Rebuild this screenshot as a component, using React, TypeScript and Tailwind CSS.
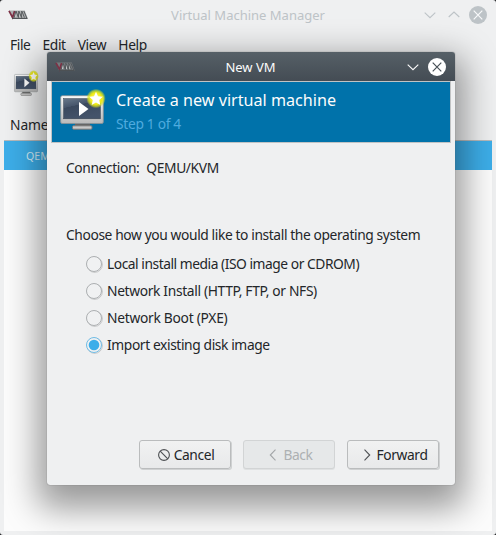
import React from "react";

function VmmLogo() {
  return (
    <svg width="20" height="12" viewBox="0 0 20 12" className="shrink-0" fill="none">
      <path d="M1 1.5h15.8l3 8.3H4z" fill="#8b8d8f" opacity=".65" />
      <path d="M7.6 8 7.8 2.5M11.4 8l-.5-5.5M15 8l-1-5.5" stroke="#c4c5c6" strokeWidth="1.4" />
      <path d="M1 1.8 4.6 8.6 6.6 2" stroke="#7c3045" strokeWidth="1.7" />
      <path d="M6 8.8 8 2l2.4 6.5.4-6.5 2.8 6.5L13.8 2l2.6 6.5M15.8 2l3 7" stroke="#54585b" strokeWidth="1" />
      <path d="M4 9.4h15.5" stroke="#4c5053" strokeWidth="1.1" />
    </svg>
  );
}

function MonitorIcon({ width, height, id }: { width: number; height: number; id: string }) {
  return (
    <svg width={width} height={height} viewBox="0 0 48 48" preserveAspectRatio="none" className="shrink-0 overflow-visible" fill="none">
      <defs>
        <linearGradient id={id + "frame"} x1="0" y1="0" x2="0" y2="1">
          <stop stopColor="#fafafa" />
          <stop offset="1" stopColor="#b9b9b9" />
        </linearGradient>
        <linearGradient id={id + "screen"} x1="0" y1="0" x2=".4" y2="1">
          <stop stopColor="#68788a" />
          <stop offset=".4" stopColor="#46556b" />
          <stop offset=".41" stopColor="#3b495e" />
          <stop offset="1" stopColor="#44536a" />
        </linearGradient>
        <radialGradient id={id + "glow"}>
          <stop stopColor="#fffb90" />
          <stop offset=".6" stopColor="#eeea14" />
          <stop offset=".8" stopColor="#dce320" stopOpacity=".7" />
          <stop offset="1" stopColor="#d5df20" stopOpacity="0" />
        </radialGradient>
      </defs>
      <path d="M17 36h15v3.5H17z" fill="#666" />
      <rect x="14.5" y="38.8" width="19.5" height="3.4" rx="1" fill="#c9c9c9" stroke="#777" />
      <rect x="2.7" y="8.7" width="42.6" height="27.8" rx="1.5" fill={`url(#${id}frame)`} stroke="#8b9094" strokeWidth=".8" />
      <rect x="5.6" y="11.6" width="36.8" height="20.2" fill={`url(#${id}screen)`} stroke="#35404f" strokeWidth=".5" />
      <path d="m21 15 9.5 7L21 29z" fill="#fff" />
      <circle cx="38" cy="11.5" r="9.8" fill={`url(#${id}glow)`} />
      <path d="m38 4.8 2 4.4 4.8.5-3.6 3.3 1.1 4.9-4.3-2.5-4.3 2.5 1.1-4.9-3.6-3.3 4.8-.5z" fill="#fff" />
    </svg>
  );
}

function Chevron({ d, color }: { d: string; color: string }) {
  return (
    <svg width="12" height="12" viewBox="0 0 12 12" className="shrink-0" fill="none" stroke={color} strokeWidth="1.1">
      <path d={d} />
    </svg>
  );
}

function CloseIcon({ disc, cross }: { disc: string; cross: string }) {
  return (
    <svg width="18" height="18" viewBox="0 0 18 18" className="shrink-0" fill="none">
      <circle cx="9" cy="9" r="9" fill={disc} />
      <path d="m4.7 4.7 8.6 8.6m0-8.6-8.6 8.6" stroke={cross} strokeWidth="1.2" />
    </svg>
  );
}

const options = [
  { label: "Local install media (ISO image or CDROM)", tracking: "tracking-[-0.46px]" },
  { label: "Network Install (HTTP, FTP, or NFS)", tracking: "tracking-[-0.34px]" },
  { label: "Network Boot (PXE)", tracking: "tracking-[-0.28px]" },
  { label: "Import existing disk image", tracking: "tracking-[-0.39px]" },
];

function Radio({ label, tracking, checked }: { label: string; tracking: string; checked: boolean }) {
  return (
    <div className="flex h-[27px] items-center gap-1">
      <svg width="17" height="18" viewBox="0 0 17 18" className="shrink-0" fill="none">
        <circle cx="8.7" cy="9.7" r="7.7" stroke="#000" strokeOpacity=".16" />
        <circle cx="8" cy="9" r="7.5" fill="#f0f1f2" stroke={checked ? "#70bde6" : "#adb0b2"} />
        {checked && <circle cx="8" cy="9" r="5.3" fill="#3daee9" />}
      </svg>
      <span className={tracking}>{label}</span>
    </div>
  );
}

function DialogButton({ icon, label, disabled }: { icon: React.ReactNode; label: string; disabled?: boolean }) {
  return (
    <button
      className={`flex h-[29px] w-[92px] items-center justify-center gap-1 rounded-[3px] border pl-0.5 ${
        disabled
          ? "border-[#d2d4d5] bg-[#e6e8e9] text-[#adb0b2] shadow-[0_1px_0_#dfe1e2]"
          : "border-[#babcbd] bg-linear-to-b from-[#f1f2f2] to-[#e8e9ea] shadow-[1px_1px_0_#cfd1d2]"
      }`}
    >
      {icon}
      <span>{label}</span>
    </button>
  );
}

export default function App() {
  return (
    <div className="relative h-[535px] w-[496px] overflow-hidden bg-[#1c1e20] font-['Noto_Sans',sans-serif] text-[13.8px] leading-[18px] tracking-[-0.39px] text-[#232629]">
      <div className="flex h-full flex-col rounded-[3px] bg-[#eff0f1]">
        <header className="grid h-[29px] grid-cols-[90px_1fr_90px] items-center pr-[9px] pl-2">
          <VmmLogo />
          <h1 className="pl-px text-center text-[13px] tracking-normal text-[#bdc3c7]">Virtual Machine Manager</h1>
          <div className="flex items-center justify-end gap-3">
            <Chevron d="m.7 3.7 5.3 5 5.3-5" color="#bdc3c7" />
            <div className="-mr-[3px]">
              <Chevron d="m.7 8 5.3-5 5.3 5" color="#bdc3c7" />
            </div>
            <CloseIcon disc="#bdc3c7" cross="#f8f9fa" />
          </div>
        </header>
        <nav className="flex h-[31px] items-center gap-[12px] pl-2.5">
          <span>File</span>
          <span>Edit</span>
          <span>View</span>
          <span>Help</span>
        </nav>
        <div className="flex h-[50px] items-start pt-[9px] pl-[13px]">
          <MonitorIcon width={26} height={30} id="toolbar" />
        </div>
        <div className="flex h-[30px] items-center pl-2.5 tracking-[-0.1px]">Name</div>
        <main className="mx-1 mb-1 flex-1 border-t border-[#b8babb] bg-[#fcfcfc]">
          <div className="flex h-[29px] items-center bg-[#3daee9] pl-[22px] text-[10.6px] tracking-normal text-[#d5eefa]">QEMU/KVM</div>
        </main>
      </div>

      <section className="absolute top-[52px] left-[47px] flex h-[433px] w-[408px] flex-col rounded-[3px] bg-[#eff0f1] shadow-[0_0_1px_#555,0_14px_34px_9px_rgba(0,0,0,0.4)]">
        <header className="grid h-[29px] shrink-0 grid-cols-[80px_1fr_80px] items-center rounded-t-[3px] bg-linear-to-b from-[#566067] to-[#444c54] pr-[9px] pl-2">
          <VmmLogo />
          <h2 className="text-center text-[13px] tracking-normal text-[#fcfcfc]">New VM</h2>
          <div className="flex items-center justify-end gap-[9px]">
            <Chevron d="m.7 3.7 5.3 5 5.3-5" color="#fcfcfc" />
            <CloseIcon disc="#fff" cross="#475057" />
          </div>
        </header>
        <div className="mr-1 ml-1 flex h-[62px] shrink-0 gap-[10px] border border-[#c1c3c4] bg-[#0072aa] pt-[5px] pl-[6px]">
          <MonitorIcon width={48} height={48} id="banner" />
          <div className="pt-px">
            <div className="text-[16.15px] leading-[25px] tracking-normal text-[#fcfcfc]">Create a new virtual machine</div>
            <div className="pt-0.5 tracking-[-0.32px] text-[#4fabdf]">Step 1 of 4</div>
          </div>
        </div>
        <div className="flex flex-1 flex-col px-[19px] pt-4">
          <div className="flex gap-[7px]">
            <span>Connection:</span>
            <span>QEMU/KVM</span>
          </div>
          <div className="mt-[49px]">Choose how you would like to install the operating system</div>
          <div className="mt-1.5 pl-5">
            {options.map((option, i) => (
              <Radio key={option.label} {...option} checked={i === 3} />
            ))}
          </div>
        </div>
        <footer className="flex justify-end gap-3 pr-4 pb-4">
          <DialogButton
            label="Cancel"
            icon={
              <svg width="12" height="12" viewBox="0 0 12 12" fill="none" stroke="#4d5053" strokeWidth="1.1">
                <circle cx="6" cy="6" r="5.4" />
                <path d="m2.2 2.2 7.6 7.6" />
              </svg>
            }
          />
          <DialogButton label="Back" disabled icon={<Chevron d="M8.5.7 3.3 6l5.2 5.3" color="#a2a5a7" />} />
          <DialogButton label="Forward" icon={<Chevron d="M3.5.7 8.7 6l-5.2 5.3" color="#4d5053" />} />
        </footer>
      </section>
    </div>
  );
}
